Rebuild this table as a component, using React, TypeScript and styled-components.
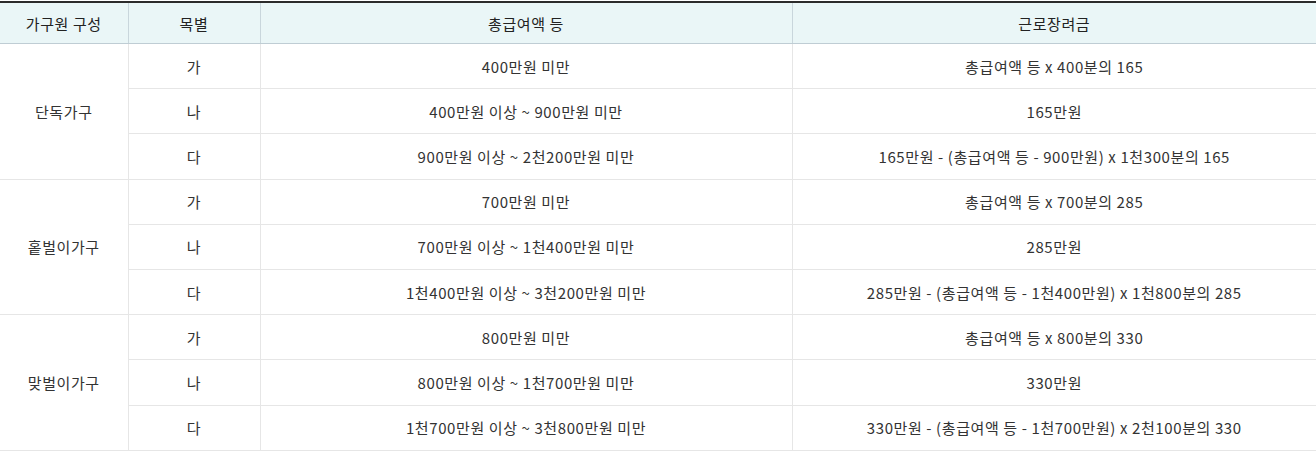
import React from 'react';
import styled, { createGlobalStyle } from 'styled-components';

const GlobalStyle = createGlobalStyle`
  html, body {
    margin: 0;
    padding: 0;
    background: #fff;
  }
  body {
    font-family: "Malgun Gothic", "Noto Sans CJK KR", "Noto Sans", sans-serif;
  }
`;

const Wrapper = styled.div`
  padding-top: 1px;
  width: 1316px;
`;

const Table = styled.table`
  width: 100%;
  border-collapse: collapse;
  table-layout: fixed;
  border-top: 2px solid #2b2b2b;
  font-size: 15px;
  letter-spacing: 0.6px;
  color: #333;
`;

const HeadCell = styled.th`
  height: 40px;
  padding: 0;
  background: #eaf6f7;
  font-weight: normal;
  color: #222;
  text-align: center;
  border-bottom: 1px solid #bfcdd4;
  border-left: 1px solid #c9d6dc;

  &:first-child {
    border-left: none;
  }
`;

const Cell = styled.td<{ $group?: boolean }>`
  height: 44.2px;
  padding: 0;
  text-align: center;
  vertical-align: middle;
  border-bottom: 1px solid #e6e6e6;
  border-left: ${p => (p.$group ? 'none' : '1px solid #e6e6e6')};
`;

interface Band {
  from: string;
  amount: string;
}

interface Group {
  name: string;
  rows: Band[];
}

const groups: Group[] = [
  {
    name: '단독가구',
    rows: [
      { from: '400만원 미만', amount: '총급여액 등 x 400분의 165' },
      { from: '400만원 이상 ~ 900만원 미만', amount: '165만원' },
      { from: '900만원 이상 ~ 2천200만원 미만', amount: '165만원 - (총급여액 등 - 900만원) x 1천300분의 165' },
    ],
  },
  {
    name: '홑벌이가구',
    rows: [
      { from: '700만원 미만', amount: '총급여액 등 x 700분의 285' },
      { from: '700만원 이상 ~ 1천400만원 미만', amount: '285만원' },
      { from: '1천400만원 이상 ~ 3천200만원 미만', amount: '285만원 - (총급여액 등 - 1천400만원) x 1천800분의 285' },
    ],
  },
  {
    name: '맞벌이가구',
    rows: [
      { from: '800만원 미만', amount: '총급여액 등 x 800분의 330' },
      { from: '800만원 이상 ~ 1천700만원 미만', amount: '330만원' },
      { from: '1천700만원 이상 ~ 3천800만원 미만', amount: '330만원 - (총급여액 등 - 1천700만원) x 2천100분의 330' },
    ],
  },
];

const labels = ['가', '나', '다'];

export default function App() {
  return (
    <Wrapper>
      <GlobalStyle />
      <Table>
        <colgroup>
          <col style={{ width: 128 }} />
          <col style={{ width: 132 }} />
          <col style={{ width: 532 }} />
          <col />
        </colgroup>
        <thead>
          <tr>
            <HeadCell>가구원 구성</HeadCell>
            <HeadCell>목별</HeadCell>
            <HeadCell>총급여액 등</HeadCell>
            <HeadCell>근로장려금</HeadCell>
          </tr>
        </thead>
        <tbody>
          {groups.map(g =>
            g.rows.map((r, i) => (
              <tr key={g.name + i}>
                {i === 0 && (
                  <Cell $group rowSpan={g.rows.length}>
                    {g.name}
                  </Cell>
                )}
                <Cell>{labels[i]}</Cell>
                <Cell>{r.from}</Cell>
                <Cell>{r.amount}</Cell>
              </tr>
            ))
          )}
        </tbody>
      </Table>
    </Wrapper>
  );
}
